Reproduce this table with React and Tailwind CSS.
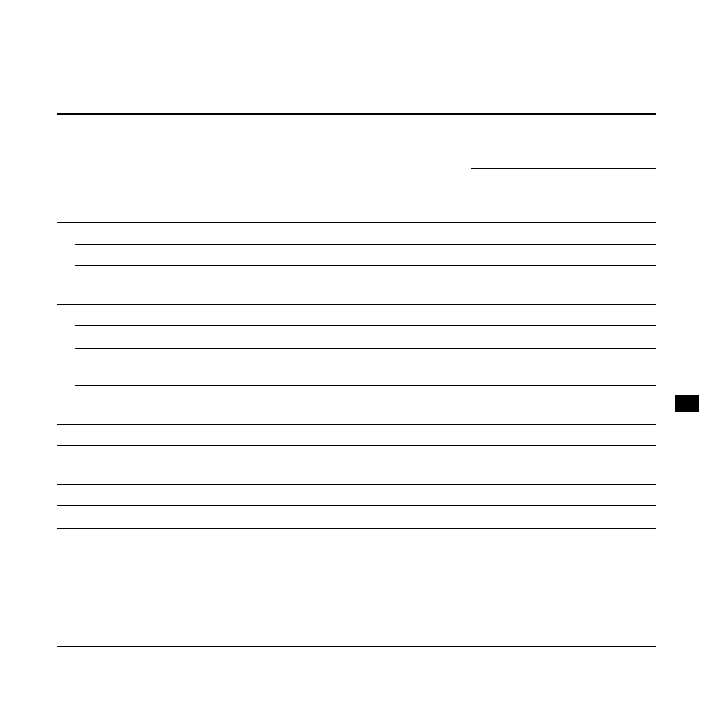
const ROWS = [
  { h: 22, indent: false },
  { h: 21, indent: true },
  { h: 39, indent: true },
  { h: 21, indent: false },
  { h: 23, indent: true },
  { h: 37, indent: true },
  { h: 39, indent: true },
  { h: 21, indent: false },
  { h: 39, indent: false },
  { h: 21, indent: false },
  { h: 23, indent: false },
  { h: 118, indent: false },
];

function Row({ h, indent }) {
  return (
    <div className={indent ? 'pl-[18px]' : ''}>
      <div className="border-t border-black" style={{ height: h }} />
    </div>
  );
}

export default function App() {
  return (
    <div className="w-[708px] h-[708px] bg-white flex items-start pl-[57px] pt-[113px] font-['Liberation_Sans',sans-serif]">
      <div className="w-[599px] flex flex-col">
        {/* header block */}
        <div className="h-[109px] border-t-2 border-black">
          <div className="ml-auto w-[185px] h-[54px] border-b border-black" />
        </div>

        {ROWS.map((r, i) => (
          <Row key={i} {...r} />
        ))}
        <div className="border-t border-black" />
      </div>

      {/* side tab */}
      <div className="ml-[19px] mt-[282px] w-[24px] h-[17px] bg-black" />
    </div>
  );
}
